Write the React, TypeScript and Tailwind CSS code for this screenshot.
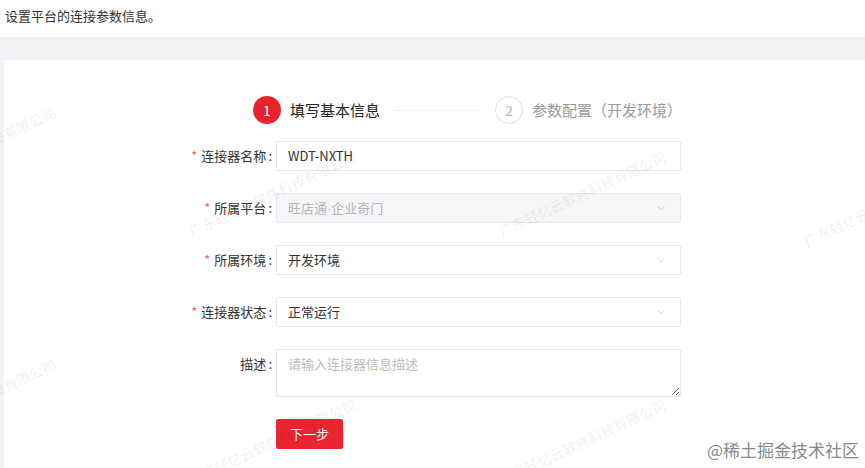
import { ChevronDown } from 'lucide-react'

const font = { fontFamily: '"Noto Sans CJK SC", "Noto Sans", sans-serif' }

interface FieldProps {
  label: string
  required?: boolean
  children: React.ReactNode
}

function Field({ label, required, children }: FieldProps) {
  return (
    <div className="flex items-start mb-[22px]">
      <div className="w-[268px] h-[30px] flex items-center justify-end text-[13px] text-[#333]">
        {required && <span className="text-[#f56c6c] mr-[4px]">*</span>}
        {label}
        <span className="ml-[2px]">:</span>
      </div>
      <div className="ml-[4px] w-[405px]">{children}</div>
    </div>
  )
}

function Select({ value, disabled }: { value: React.ReactNode; disabled?: boolean }) {
  return (
    <div
      className={`h-[30px] flex items-center justify-between pl-[11px] pr-[12px] border border-[#e4e7ed] rounded-[2px] text-[13px] ${
        disabled ? 'bg-[#f5f6f7] text-[#b4b4b4]' : 'bg-white text-[#333]'
      }`}
    >
      <span>{value}</span>
      <ChevronDown className="w-[14px] h-[14px] text-[#c0c4cc]" strokeWidth={1.2} />
    </div>
  )
}

const marks = [
  { left: -110, top: 178 },
  { left: 190, top: 222 },
  { left: 500, top: 222 },
  { left: 805, top: 232 },
  { left: -110, top: 430 },
  { left: 190, top: 470 },
  { left: 500, top: 470 },
]

export default function App() {
  return (
    <div className="relative w-[865px] h-[468px] overflow-hidden bg-white" style={font}>
      <div className="h-[37px] pl-[5px] pt-[6px] text-[13px] text-[#333]">设置平台的连接参数信息。</div>
      <div className="h-[23px] bg-[#f0f2f5]" />
      <div className="flex h-[408px]">
        <div className="w-[4px] bg-[#f0f2f5]" />
        <div className="flex-1 bg-white">
          {/* steps */}
          <div className="flex items-start pl-[249px] pt-[36px] h-[81px]">
            <div className="flex items-center">
              <div className="w-[28px] h-[28px] rounded-full bg-[#e8232c] text-white text-[14px] flex items-center justify-center">
                1
              </div>
              <span className="ml-[9px] text-[15px] text-[#222]">填写基本信息</span>
              <div className="ml-[14px] w-[86px] h-px bg-[#eceef1]" />
              <div className="ml-[15px] w-[28px] h-[28px] rounded-full border border-[#dcdcdc] text-[#b9b9b9] text-[14px] flex items-center justify-center">
                2
              </div>
              <span className="ml-[9px] text-[15px] text-[#9a9a9a]">参数配置（开发环境）</span>
            </div>
          </div>

          <Field label="连接器名称" required>
            <div className="h-[30px] flex items-center pl-[11px] border border-[#e4e7ed] rounded-[2px] text-[13px] text-[#333]">
              WDT-NXTH
            </div>
          </Field>
          <Field label="所属平台" required>
            <Select
              value={
                <>
                  旺店通<span style={{ fontFamily: '"Liberation Sans", sans-serif' }}>·</span>企业奇门
                </>
              }
              disabled
            />
          </Field>
          <Field label="所属环境" required>
            <Select value="开发环境" />
          </Field>
          <Field label="连接器状态" required>
            <Select value="正常运行" />
          </Field>
          <Field label="描述">
            <textarea
              className="block w-full h-[48px] border border-[#e4e7ed] rounded-[2px] px-[11px] py-[4px] text-[13px] placeholder:text-[#bdbdbd] outline-none"
              placeholder="请输入连接器信息描述"
            />
          </Field>
          <div className="pl-[272px]">
            <button className="w-[67px] h-[30px] rounded-[2px] bg-[#ea2530] text-white text-[13px]">下一步</button>
          </div>
        </div>
      </div>

      {/* watermarks */}
      {marks.map((m, i) => (
        <div
          key={i}
          className="absolute pointer-events-none whitespace-nowrap text-[14px] text-[rgba(0,0,0,0.08)] origin-left -rotate-[25deg]"
          style={{ left: m.left, top: m.top }}
        >
          广东轻亿云软件科技有限公司
        </div>
      ))}

      <div className="absolute right-[6px] bottom-[6px] text-[17px] text-[#8a8a8a] pointer-events-none">
        @稀土掘金技术社区
      </div>
    </div>
  )
}
